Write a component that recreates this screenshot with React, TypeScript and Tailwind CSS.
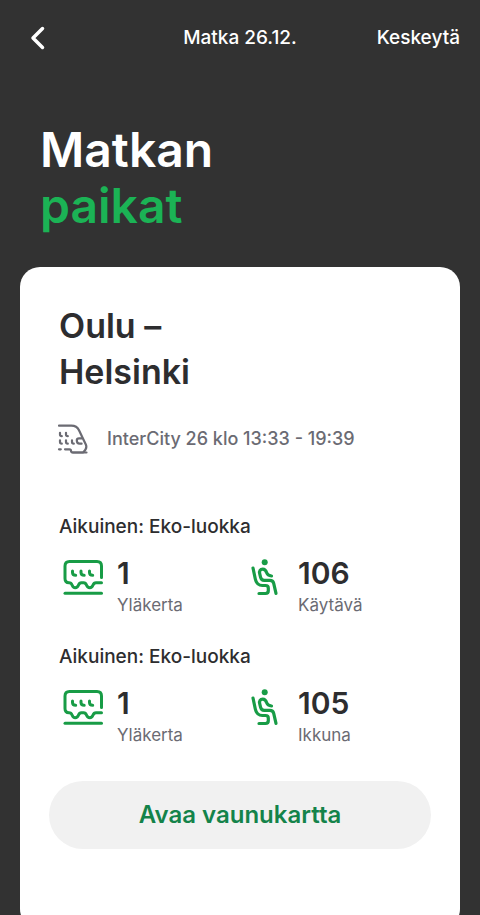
import * as React from "react";

interface SeatInfo {
  id: string;
  passenger: string;
  coach: string;
  deck: string;
  seat: string;
  position: string;
}

const seats: SeatInfo[] = [
  {
    id: "seat-106",
    passenger: "Aikuinen: Eko-luokka",
    coach: "1",
    deck: "Yläkerta",
    seat: "106",
    position: "Käytävä",
  },
  {
    id: "seat-105",
    passenger: "Aikuinen: Eko-luokka",
    coach: "1",
    deck: "Yläkerta",
    seat: "105",
    position: "Ikkuna",
  },
];

const BackIcon = () => (
  <svg width="16" height="24" viewBox="0 0 16 24" fill="none" aria-hidden="true">
    <path
      d="M12.5 2.5 3 12l9.5 9.5"
      stroke="currentColor"
      strokeWidth="3.5"
      strokeLinecap="round"
      strokeLinejoin="round"
    />
  </svg>
);

const TrainIcon = () => (
  <svg
    width="32"
    height="32"
    viewBox="0 0 32 32"
    fill="none"
    stroke="currentColor"
    strokeWidth="2.2"
    strokeLinecap="round"
    strokeLinejoin="round"
    aria-hidden="true"
  >
    <path d="M2 2.7h12.3c4 0 6.2 1.2 7.7 4.5l6.7 14c1.5 3.2.6 5.6-2.700 8.300H16c-1.500 0-2-.7-2-1.700s-.5-1.500-1.500-1.500H8" />
    <path d="M2 26.3h1.8M16 29.5h13.5" />
    <path d="M3 9.800v1.700c0 1.200.6 1.700 1.800 1.700M9 9.800v1.700c0 1.200.6 1.700 1.800 1.700" />
    <path d="M3 17.300V19c0 1.200.6 1.700 1.800 1.700M9 17.300V19c0 1.200.6 1.700 1.800 1.700M15 17.300V19c0 1.200.6 1.700 1.800 1.700" />
    <path d="M25 15.300h-3c-1.500 0-2.200.8-2.200 2 0 2.200 1 3.400 2.800 3.400h2" />
  </svg>
);

const CoachIcon = () => (
  <svg
    width="40"
    height="36"
    viewBox="0 0 40 36"
    fill="none"
    stroke="currentColor"
    strokeWidth="3"
    strokeLinecap="round"
    strokeLinejoin="round"
    aria-hidden="true"
  >
    <path d="M38.5 18.5V7c0-3-1.5-4.500-4.500-4.500H6.500C3.500 2.500 2 4 2 7v12.500c0 2.700 1.500 4.300 4 4.300 2 0 2.600.9 3.200 2.400.6 1.600 1.400 2.500 3 2.500s2.600-.8 3.200-2.400c.6-1.600 1.500-2.500 3-2.500h2.200c1.500 0 2.400.9 3 2.500.6 1.600 1.600 2.400 3.200 2.400s2.500-.8 3.100-2.400c.6-1.600 1.600-2.500 3.100-2.500h5.500" />
    <path d="M2 34.3h36.5" />
    <path d="M9.500 12v1.500c0 1.800 1 2.700 3.200 2.700M18 12v1.500c0 1.800 1 2.700 3.200 2.700M26.500 12v1.500c0 1.800 1 2.700 3.200 2.700" />
  </svg>
);

const SeatIcon = () => (
  <svg
    width="30"
    height="38"
    viewBox="-1 0 30 38"
    fill="none"
    stroke="currentColor"
    strokeWidth="3.2"
    strokeLinecap="round"
    strokeLinejoin="round"
    aria-hidden="true"
  >
    <circle cx="14.7" cy="4.3" r="3" fill="currentColor" stroke="none" />
    <path d="M3 10l2.300 11c.9 4 3 6.500 7 6.500h3.200c1.800 0 2.800.9 2.800 2.400v2.900c0 1.800-1 2.700-2.800 2.700H9" />
    <path d="M21.500 18c-2.800-.3-4-1-4.700-3-.8-2.300-2-3.800-4-3.800-2.600 0-3.700 1.800-3.100 4.500l.9 3.700c.5 2 1.700 3 3.700 3h5.700c2 0 3.200 1 3.700 3l2.300 10" />
  </svg>
);

interface FigureProps {
  icon: React.ReactNode;
  value: string;
  label: string;
}

const Figure: React.FC<FigureProps> = ({ icon, value, label }) => (
  <div className="flex gap-2.5">
    <div className="flex h-10 w-12 shrink-0 items-center justify-center text-[#189c46]">
      {icon}
    </div>
    <div>
      <p className="text-3xl leading-8 font-semibold">{value}</p>
      <p className="text-[17px] leading-8 text-[#6b6b73]">{label}</p>
    </div>
  </div>
);

const App: React.FC = () => {
  return (
    <div className="flex h-screen flex-col overflow-hidden bg-[#323232] font-['Inter',sans-serif] text-[#2d2d2f]">
      <header className="grid h-[76px] shrink-0 grid-cols-[1fr_auto_1fr] items-center px-5 text-[19px] font-medium text-white">
        <button type="button" aria-label="Takaisin" className="justify-self-start px-2.5">
          <BackIcon />
        </button>
        <p>Matka 26.12.</p>
        <button type="button" className="justify-self-end">
          Keskeytä
        </button>
      </header>

      <h1 className="px-10 pt-[46px] text-5xl leading-[56px] font-semibold text-white">
        Matkan
        <span className="block text-[#1bb355]">paikat</span>
      </h1>

      <main className="mx-5 mt-[33px] shrink-0 rounded-[20px] bg-white px-[29px] pt-9 pb-20">
        <h2 className="px-2.5 text-[34px] leading-[46px] font-semibold">
          Oulu –
          <br />
          Helsinki
        </h2>

        <div className="mt-7 flex items-center gap-[18px] px-2 text-[#6b6b73]">
          <TrainIcon />
          <p className="text-lg leading-8 font-medium">InterCity 26 klo 13:33 - 19:39</p>
        </div>

        <div className="mt-14 flex flex-col gap-5">
          {seats.map((item) => (
            <section key={item.id} className="px-2.5">
              <h3 className="text-[19px] leading-8 font-medium">{item.passenger}</h3>
              <div className="mt-3.5 grid grid-cols-2">
                <Figure icon={<CoachIcon />} value={item.coach} label={item.deck} />
                <Figure icon={<SeatIcon />} value={item.seat} label={item.position} />
              </div>
            </section>
          ))}
        </div>

        <button
          type="button"
          className="mt-[30px] h-[68px] w-full rounded-full bg-[#f1f1f1] text-2xl font-semibold text-[#14834a]"
        >
          Avaa vaunukartta
        </button>
      </main>
    </div>
  );
};

export default App;
